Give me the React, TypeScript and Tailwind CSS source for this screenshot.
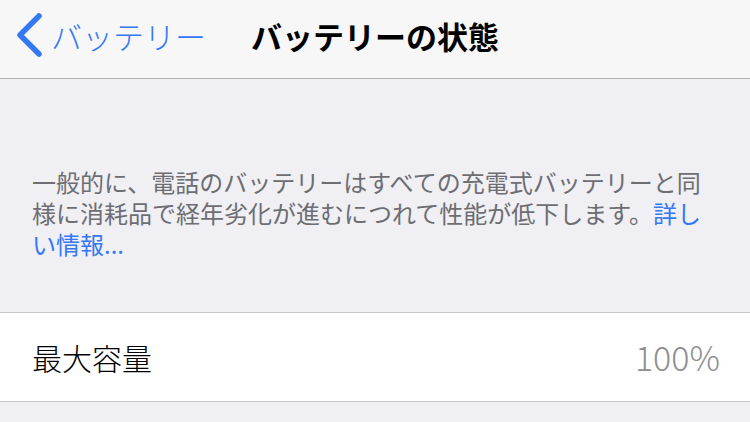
import React from 'react';

const font = { fontFamily: '"Noto Sans CJK JP", "Noto Sans", sans-serif' };

function Chevron() {
  return (
    <svg width="28" height="44" viewBox="0 0 28 44" fill="none">
      <path d="M24 3 L5 22 L24 41" stroke="#3478f6" strokeWidth="5.5" strokeLinecap="round" strokeLinejoin="round" />
    </svg>
  );
}

export default function App() {
  return (
    <div className="w-[750px] h-[422px] overflow-hidden bg-[#efeff4] text-black" style={font}>
      {/* Nav bar */}
      <header className="h-[79px] bg-[#f7f7f7] border-b border-[#b2b2b2] grid grid-cols-[1fr_auto_1fr] items-center pb-[8px]">
        <div className="flex items-center pl-[15px]">
          <Chevron />
          <span className="ml-[8px] text-[31px] font-light text-[#3478f6] leading-none">バッテリー</span>
        </div>
        <span className="text-[31px] font-bold leading-none">バッテリーの状態</span>
        <div />
      </header>

      {/* Description */}
      <div className="pt-[87px]">
        <p className="pl-8 pr-[42px] text-[24px] leading-[31px] text-[#6d6d72]">
          一般的に、電話のバッテリーはすべての充電式バッテリーと同様に消耗品で経年劣化が進むにつれて性能が低下します。<span className="text-[#3478f6]">詳しい情報...</span>
        </p>

        {/* Maximum capacity row */}
        <div className="mt-[53px] h-[90px] bg-white border-y border-[#c8c7cc] flex items-center justify-between pl-8 pr-[30px]">
          <span className="text-[30px] font-light leading-none">最大容量</span>
          <span className="text-[34px] font-light text-[#8e8e93] leading-none">100%</span>
        </div>

        <p className="mt-[15px] pl-8 pr-[42px] text-[24px] leading-[31px] text-[#6d6d72]">
          これは新品時と比較したバッテリー容量の基準です。容量が減ると充電と充電の間の使用時間が短くなる可能性があります。
        </p>
      </div>
    </div>
  );
}
